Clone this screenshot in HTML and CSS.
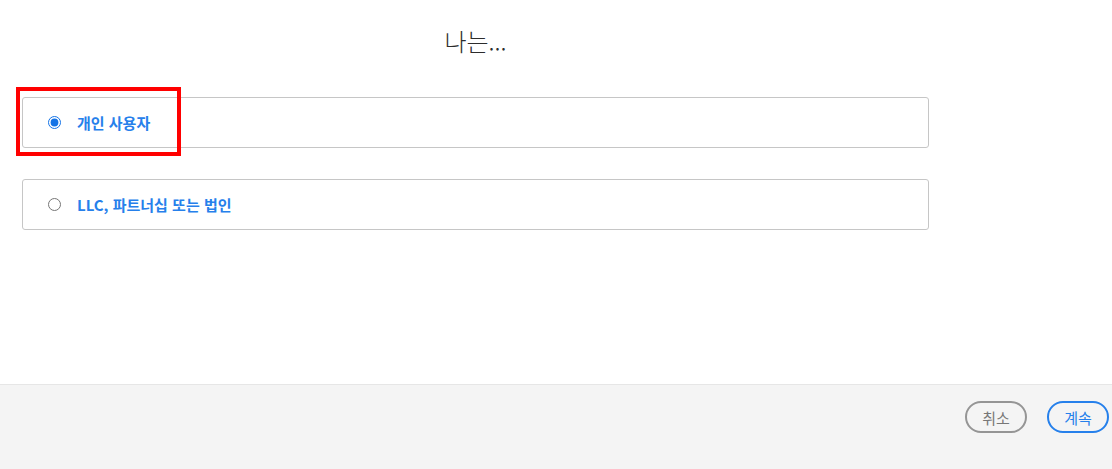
FILE: index.html
```html
<!DOCTYPE html>
<html lang="ko">
<head>
    <meta charset="UTF-8">
    <meta name="viewport" content="width=device-width, initial-scale=1.0">
    <title>나는...</title>
    <link rel="stylesheet" href="styles.css">
</head>
<body>
    <div class="page">
        <div class="content">
            <h1 class="title">나는...</h1>
            <div class="options">
                <label class="option highlighted">
                    <input type="radio" name="entity" value="individual" checked>
                    <span>개인 사용자</span>
                </label>
                <label class="option">
                    <input type="radio" name="entity" value="business">
                    <span>LLC, 파트너십 또는 법인</span>
                </label>
            </div>
        </div>
        <div class="footer">
            <button class="btn btn-cancel">취소</button>
            <button class="btn btn-continue">계속</button>
        </div>
    </div>
</body>
</html>
```
FILE: styles.css
```css
body {
    margin: 0;
    font-family: "Noto Sans CJK KR", "Noto Sans", sans-serif;
    background-color: white;
}
.page {
    width: 1112px;
    height: 469px;
    display: flex;
    flex-direction: column;
}
.content {
    height: 384px;
    padding: 0 22px;
    box-sizing: border-box;
}
.title {
    width: 907px;
    margin: 0;
    padding-top: 24px;
    text-align: center;
    font-size: 24px;
    font-weight: 300;
    line-height: 34px;
    color: #2c2c2c;
}
.options {
    width: 907px;
    margin-top: 39px;
    display: flex;
    flex-direction: column;
    gap: 31px;
}
.option {
    position: relative;
    display: flex;
    align-items: center;
    gap: 16px;
    height: 51px;
    padding-left: 25px;
    border: 1px solid #c6c6c6;
    border-radius: 3px;
    box-sizing: border-box;
    cursor: pointer;
}
.option input {
    width: 13px;
    height: 13px;
    margin: 0;
    accent-color: #1473e6;
}
.option span {
    color: #2680eb;
    font-size: 15px;
    font-weight: bold;
}
.option.highlighted::after {
    content: "";
    position: absolute;
    left: -7px;
    top: -11px;
    width: 157px;
    height: 61px;
    border: 4px solid #ff0000;
}
.footer {
    flex: 1;
    display: flex;
    justify-content: flex-end;
    align-items: flex-start;
    gap: 20px;
    padding: 16px 3px 0 0;
    background-color: #f4f4f4;
    border-top: 1px solid #e6e6e6;
}
.btn {
    width: 62px;
    height: 32px;
    border-radius: 16px;
    background: transparent;
    font-family: inherit;
    font-size: 15px;
    cursor: pointer;
    padding: 0;
}
.btn-cancel {
    border: 2px solid #959595;
    color: #777;
}
.btn-continue {
    border: 2px solid #2680eb;
    color: #2680eb;
}
```
